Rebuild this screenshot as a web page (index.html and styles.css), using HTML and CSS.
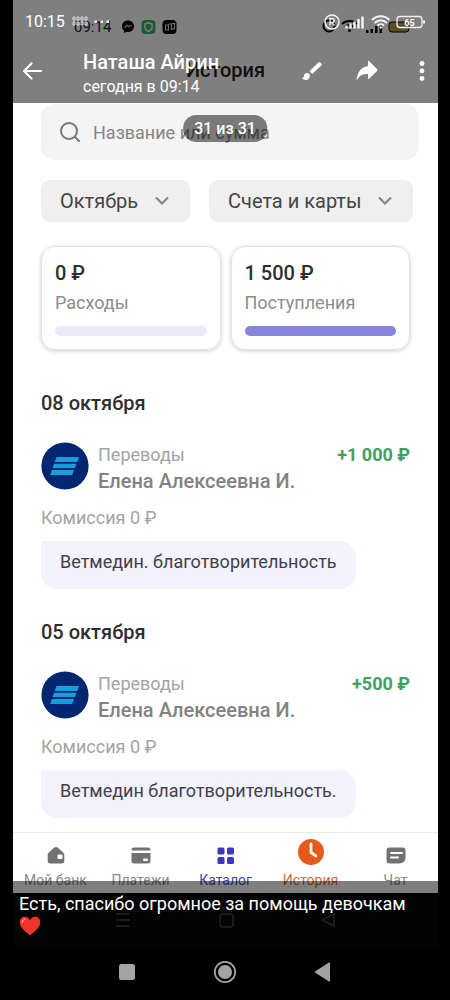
FILE: index.html
```html
<!DOCTYPE html>
<html lang="ru">
<head>
<meta charset="utf-8">
<meta name="viewport" content="width=device-width, initial-scale=1">
<title>Наташа Айрин</title>
<link rel="stylesheet" href="styles.css">
</head>
<body>
<div class="viewer">
  <main class="photo">
    <div class="inner-status">
      <span class="inner-time">09:14</span>
      <svg class="inner-apps" width="56" height="16" viewBox="0 0 56 16">
        <path d="M7 1.5C3.400 1.500 1 4 1 7.200c0 1.900.8 3.300 2 4.300V14l2.100-1.200c.6.100 1.200.2 1.900.2 3.500 0 6-2.500 6-5.800S10.500 1.500 7 1.500z" fill="#000"/>
        <path d="M3.500 9 6 6.300l2 1.500L10.500 6" fill="none" stroke="#bbb" stroke-width="1.300"/>
        <rect x="20.500" y="1" width="14" height="14" rx="4" fill="#38b868"/>
        <path d="M24 5l3.500-1.200L31 5v3.500c0 2-1.500 3-3.500 4-2-1-3.500-2-3.500-4z" fill="none" stroke="#fff" stroke-width="1.400"/>
        <rect x="41.500" y="1" width="14" height="14" rx="4" fill="#000"/>
        <path d="M44.500 6h3v5h-3zM47.500 5h3v6M50.500 4.500h3V10h-3" fill="none" stroke="#ddd" stroke-width="1.200"/>
      </svg>
      <svg class="inner-signals" width="90" height="18" viewBox="0 0 90 18">
        <circle cx="8" cy="8" r="5.500" fill="none" stroke="#000" stroke-width="2"/>
        <path d="M21 6c4-4 11-4 15 0M24 9c3-2.500 6-2.500 9 0" fill="none" stroke="#000" stroke-width="2"/>
        <circle cx="28.500" cy="12.500" r="1.500"/>
        <path d="M45 12h2.500v3H45zM49.500 11H52v4h-2.500zM54 8h2.500v7H54zM58.500 5H61v10h-2.500z"/>
        <rect x="68" y="4" width="20" height="10" rx="3" fill="#b79a48" stroke="#000"/>
      </svg>
    </div>
    <h1 class="inner-title">История</h1>

    <div class="feed">
      <label class="search">
        <svg width="22" height="22" viewBox="0 0 22 22" fill="none" stroke="#777" stroke-width="2" stroke-linecap="round"><circle cx="10" cy="10" r="8"/><path d="M16 16l4 4"/></svg>
        <input class="search-input" type="text" placeholder="Название или сумма" aria-label="Поиск">
      </label>

      <div class="filters">
        <div class="filter filter-month">
          <select class="filter-select" aria-label="Месяц"><option>Октябрь</option></select>
          <svg class="chevron" width="16" height="10" viewBox="0 0 16 10"><path d="M2 1.500l6 6 6-6" fill="none" stroke="#888" stroke-width="2.200"/></svg>
        </div>
        <div class="filter filter-source">
          <select class="filter-select" aria-label="Источник"><option>Счета и карты</option></select>
          <svg class="chevron" width="16" height="10" viewBox="0 0 16 10"><path d="M2 1.500l6 6 6-6" fill="none" stroke="#888" stroke-width="2.200"/></svg>
        </div>
      </div>

      <div class="totals">
        <section class="total"><strong class="total-sum">0 ₽</strong><span class="total-name">Расходы</span><div class="total-bar"></div></section>
        <section class="total"><strong class="total-sum">1 500 ₽</strong><span class="total-name">Поступления</span><div class="total-bar total-bar-full"></div></section>
      </div>

      <div class="days">
        <section class="day">
          <h2 class="day-title">08 октября</h2>
          <div class="operation">
            <svg class="avatar" width="48" height="48" viewBox="0 0 48 48"><circle cx="24" cy="24" r="23.600" fill="#00276f"/><path d="M15.500 15H38l-1.700 5H13.700zM13 21.800h22.500L33.800 26H11.500zM10.900 28H33l-1.800 5H9.200z" fill="#169fe0"/></svg>
            <div class="operation-text"><span class="operation-kind">Переводы</span><span class="operation-name">Елена Алексеевна И.</span></div>
            <span class="operation-sum">+1 000 ₽</span>
          </div>
          <p class="fee">Комиссия 0 ₽</p>
          <p class="message">Ветмедин. благотворительность</p>
        </section>

        <section class="day">
          <h2 class="day-title">05 октября</h2>
          <div class="operation">
            <svg class="avatar" width="48" height="48" viewBox="0 0 48 48"><circle cx="24" cy="24" r="23.600" fill="#00276f"/><path d="M15.500 15H38l-1.700 5H13.700zM13 21.800h22.500L33.800 26H11.500zM10.900 28H33l-1.800 5H9.200z" fill="#169fe0"/></svg>
            <div class="operation-text"><span class="operation-kind">Переводы</span><span class="operation-name">Елена Алексеевна И.</span></div>
            <span class="operation-sum">+500 ₽</span>
          </div>
          <p class="fee">Комиссия 0 ₽</p>
          <p class="message">Ветмедин благотворительность.</p>
        </section>
      </div>
    </div>

    <nav class="tabs">
      <a class="tab" href="#bank"><svg width="28" height="28" viewBox="0 0 28 28"><path d="M12.500 5.600q1.500-1.200 3 0l5.500 4.600q1.300 1 1.300 2.500V19q0 2.500-2.500 2.500H8.200Q5.700 21.500 5.700 19v-6.300q0-1.500 1.300-2.500z" fill="#727272"/><rect x="15.500" y="12.500" width="5" height="4.500" rx="1" fill="#fff"/></svg>Мой банк</a>
      <a class="tab" href="#pay"><svg width="28" height="28" viewBox="0 0 28 28"><path d="M4.500 8.500V8q0-2.500 2.500-2.500h14q2.500 0 2.500 2.500v.5zM4.500 11h19v8q0 2.500-2.500 2.500H7Q4.500 21.500 4.500 19z" fill="#727272"/><rect x="16" y="16.500" width="5" height="2.500" rx="1" fill="#fff"/></svg>Платежи</a>
      <a class="tab tab-catalog" href="#catalog"><svg width="28" height="28" viewBox="0 0 28 28" fill="#3b39b7"><rect x="5.500" y="5.500" width="7" height="7" rx="1.500"/><rect x="15" y="5.500" width="7" height="7" rx="1.500"/><rect x="5.500" y="15" width="7" height="7" rx="1.500"/><rect x="15" y="15" width="7" height="7" rx="1.500"/></svg>Каталог</a>
      <a class="tab tab-history" href="#history"><svg width="28" height="28" viewBox="0 0 28 28"><circle cx="14" cy="14" r="13" fill="#e65a1c"/><path d="M14 6v8.500l4.800 3.400" fill="none" stroke="#fff" stroke-width="2.800" stroke-linecap="round"/></svg>История</a>
      <a class="tab" href="#chat"><svg width="28" height="28" viewBox="0 0 28 28"><path d="M7.500 5.500h13q3 0 3 3V15q0 6.500-6.500 6.500H7.500q-3 0-3-3v-10q0-3 3-3z" fill="#727272"/><path d="M9 11h11M9 15.500h7" stroke="#fff" stroke-width="2" stroke-linecap="round"/></svg>Чат</a>
    </nav>
    <div class="inner-keys">
      <svg width="20" height="20" viewBox="0 0 20 20"><path d="M3 4h14M3 10h14M3 16h14"/></svg>
      <svg width="20" height="20" viewBox="0 0 20 20"><rect x="4" y="4" width="13" height="13" rx="3"/></svg>
      <svg width="20" height="20" viewBox="0 0 20 20"><path d="M16 4v12L4 10z"/></svg>
    </div>
  </main>

  <header class="overlay-top">
    <div class="status">
      <span class="status-time">10:15</span>
      <svg width="38" height="12" viewBox="0 0 38 12"><path d="M1 1h2v3H1zM5 1h2v3H5zM9 1h2v3H9zM13 1h2v3h-2zM1 6h2v3H1zM5 6h2v3H5zM9 6h2v3H9zM13 6h2v3h-2z" fill="none" stroke="#ddd"/><path d="M22.500 4.500h2.500v2.500h-2.500zM28.500 4.500h2.500v2.500h-2.500zM34.500 4.500h2.500v2.500h-2.500z" fill="#eee"/></svg>
      <svg class="status-icons" width="102" height="18" viewBox="0 0 102 18" fill="none" stroke="#f4f4f4">
        <circle cx="8" cy="9" r="7" stroke-width="1.500"/><path d="M6 12.500v-7h2.200a2 2 0 0 1 0 4H6m2 0 2.500 3" stroke-width="1.300"/>
        <path d="M22.500 12.500v3M26.500 10.500v5M30.500 8.500v7M34.500 6v9.500M38.500 3.500v12" stroke-width="2.400"/>
        <path d="M48 7c5-5 12.500-5 17.500 0M50.500 10c4-3.600 8.500-3.600 12.500 0M53.500 12.800c2-2 4.500-2 6.500 0" stroke-width="2"/><circle cx="56.800" cy="14.500" r="1.200" fill="#f4f4f4" stroke="none"/>
        <rect x="73" y="3.500" width="25" height="11" rx="3" stroke-width="1.300"/><path d="M100 7.500v3" stroke-width="2"/>
        <text class="battery-text" x="85.500" y="12.500" text-anchor="middle">65</text>
      </svg>
    </div>
    <div class="bar">
      <button class="icon-button" type="button" aria-label="Назад"><svg width="22" height="22" viewBox="0 0 22 22" fill="none" stroke="#fff" stroke-width="2.200" stroke-linecap="round" stroke-linejoin="round"><path d="M20 11H3M10.500 3.500 3 11l7.500 7.500"/></svg></button>
      <div class="sender"><span class="sender-name">Наташа Айрин</span><span class="sender-date">сегодня в 09:14</span></div>
      <button class="icon-button" type="button" aria-label="Рисовать"><svg width="24" height="24" viewBox="0 0 24 24" fill="#fff"><path d="M7 14c-1.700 0-3 1.300-3 3 0 1.300-1.200 2-2 2 .9 1.200 2.500 2 4 2 2.200 0 4-1.800 4-4 0-1.700-1.300-3-3-3z"/><path d="M21.500 4.800 20.200 3.400a1.300 1.300 0 0 0-1.800 0L9.500 12.200 12.300 15l9.200-8.800a1 1 0 0 0 0-1.400z"/></svg></button>
      <button class="icon-button" type="button" aria-label="Переслать"><svg width="24" height="24" viewBox="0 0 24 24" fill="#fff"><path d="M13 2.500q0-1.200 1-.4l8 8q.8.900 0 1.800l-8 7.900q-1 .7-1-.5v-4.200C8 15 4.500 16.500 2.500 20.500 1.500 21.500 1.500 20 2 18 3.500 11.500 7 8 13 7z"/></svg></button>
      <button class="icon-button icon-more" type="button" aria-label="Ещё"><svg width="6" height="20" viewBox="0 0 6 20" fill="#fff"><circle cx="3" cy="2.500" r="2.400"/><circle cx="3" cy="10" r="2.400"/><circle cx="3" cy="17.500" r="2.400"/></svg></button>
    </div>
  </header>
  <div class="counter">31 из 31</div>

  <div class="caption">Есть, спасибо огромное за помощь девочкам
    <svg class="heart" width="22" height="20" viewBox="0 0 22 20" role="img" aria-label="Сердце"><path d="M11 19.500C7 16 .8 11.800.8 6.300.8 2.800 3 .8 5.800.8c2.400 0 4.200 1.300 5.200 3.400C12 2.100 13.800.8 16.200.8c2.800 0 5 2 5 5.500 0 5.500-6.200 9.700-10.200 13.200z" fill="#f0362b"/><path d="M3.300 6.500c0-2 1.200-3.200 2.700-3.200" fill="none" stroke="#ff8a78" stroke-width="1.500" stroke-linecap="round"/></svg>
  </div>
</div>
<footer class="keys">
  <svg width="28" height="28" viewBox="0 0 28 28"><rect x="6" y="6" width="16" height="16" rx="2.500" fill="#a3a3a3"/></svg>
  <svg width="28" height="28" viewBox="0 0 28 28"><circle cx="14" cy="14" r="10.200" fill="none" stroke="#a3a3a3" stroke-width="1.800"/><circle cx="14" cy="14" r="7" fill="#a3a3a3"/></svg>
  <svg width="28" height="28" viewBox="0 0 28 28"><path d="M21 5v18q0 1-1 .5L6 14.600q-1-.6 0-1.200L20 4.500q1-.5 1 .5z" fill="#a3a3a3"/></svg>
</footer>
</body>
</html>
```
FILE: styles.css
```css
* { box-sizing: border-box; }
body { margin: 0; background: #000; font-family: Roboto, "Noto Sans", sans-serif; font-size: 18px; color: #2e2e2e; }
h1, h2 { margin: 0; font-weight: 500; }
p { margin: 0; }
svg { display: block; flex: none; }

.viewer { position: relative; padding: 0 12px 0 13px; }
.photo { background: #fff; }

.inner-status { display: flex; align-items: center; height: 54px; padding: 0 27px 0 61px; color: #222; font-size: 15px; }
.inner-apps { margin-left: 10px; }
.inner-signals { margin-left: auto; }
.inner-title { height: 50px; text-align: center; font-size: 20px; line-height: 32px; color: #222; }

.feed { padding: 0 28px; }
.search { display: flex; align-items: center; gap: 12px; height: 56px; margin-right: -9px; padding: 0 18px; border-radius: 14px; background: #f4f4f4; }
.search-input { flex: 1; min-width: 0; padding: 0; border: 0; outline: 0; background: none; font: inherit; color: #333; }
.search-input::placeholder { color: #858585; opacity: 1; }

.filters { display: flex; gap: 19px; margin: 20px -3px 0 0; }
.filter { position: relative; height: 42px; border-radius: 9px; background: #efefef; }
.filter-month { flex: 149; }
.filter-source { flex: 204; }
.filter-select { appearance: none; width: 100%; height: 100%; padding: 0 19px; border: 0; background: none; font: inherit; font-size: 20px; color: #444; }
.chevron { position: absolute; top: 16px; right: 20px; pointer-events: none; }

.totals { display: flex; gap: 10px; margin-top: 24px; }
.total { flex: 1; display: flex; flex-direction: column; height: 104px; padding: 13px; border: 1px solid #e2e2e2; border-radius: 14px; box-shadow: 0 1px 4px rgba(0, 0, 0, .2); }
.total-sum { font-size: 20px; font-weight: 500; line-height: 26px; }
.total-name { margin-top: 4px; line-height: 26px; color: #8c8c8c; }
.total-bar { height: 10px; margin-top: 10px; border-radius: 5px; background: #ebe9f8; }
.total-bar-full { background: #8583da; }

.days { display: flex; flex-direction: column; gap: 30px; padding-top: 40px; }
.day-title { font-size: 20px; line-height: 26px; }
.operation { display: flex; gap: 9px; margin-top: 26px; }
.operation-text { flex: 1; display: flex; flex-direction: column; line-height: 26px; }
.operation-kind { color: #a3a3a3; }
.operation-name { font-size: 20px; font-weight: 500; color: #828282; }
.operation-sum { line-height: 26px; font-weight: 700; color: #43a062; }
.fee { line-height: 26px; margin-top: 11px; color: #a3a3a3; }
.message { width: fit-content; min-width: 312px; margin-top: 10px; padding: 8px 19px 14px; border-radius: 2px 16px 16px 16px; background: #f4f2ff; line-height: 26px; color: #40404a; }

.tabs { display: grid; grid-template-columns: repeat(5, 1fr); margin-top: 14px; height: 61px; border-top: 1px solid #e8e8f2; }
.tab { display: flex; flex-direction: column; align-items: center; padding-top: 9px; gap: 1px; font-size: 14px; line-height: 18px; color: #8a8a8a; text-decoration: none; white-space: nowrap; }
.tab-catalog { color: #4745b5; }
.tab-history { padding-top: 5px; gap: 5px; color: #d86a38; }
.inner-keys { display: flex; justify-content: space-between; padding: 17px 100px 16px; background: #060606; fill: none; stroke: #444; stroke-width: 1.5; }

.overlay-top { position: absolute; top: 0; left: 13px; right: 12px; height: 103px; background: rgba(0, 0, 0, .5); color: #fff; }
.status { display: flex; align-items: center; gap: 7px; height: 43px; padding: 0 12px; }
.status-time { font-size: 16px; }
.status-icons { margin-left: auto; }
.battery-text { font-size: 9px; font-weight: 700; fill: #fff; stroke: none; }
.bar { display: flex; align-items: center; height: 56px; padding: 0 13px 0 8px; gap: 31px; }
.icon-button { padding: 0; border: 0; background: none; }
.icon-more { margin-left: 9px; }
.sender { flex: 1; display: flex; flex-direction: column; padding: 6px 0 0 9px; white-space: nowrap; }
.sender-name { font-size: 20px; font-weight: 500; line-height: 25px; }
.sender-date { font-size: 16px; line-height: 24px; }

.counter { position: absolute; top: 115px; left: 50%; transform: translateX(-50%); padding: 0 11px; border-radius: 13px; background: rgba(0, 0, 0, .5); color: #fff; font-size: 16px; font-weight: 500; line-height: 27px; white-space: nowrap; }
.caption { position: absolute; bottom: 0; left: 13px; right: 12px; padding: 11px 6px 10px; background: rgba(0, 0, 0, .5); color: #fff; font-size: 18px; line-height: 24px; }

.keys { display: flex; justify-content: space-between; padding: 12px 113px 0; height: 54px; }
```
